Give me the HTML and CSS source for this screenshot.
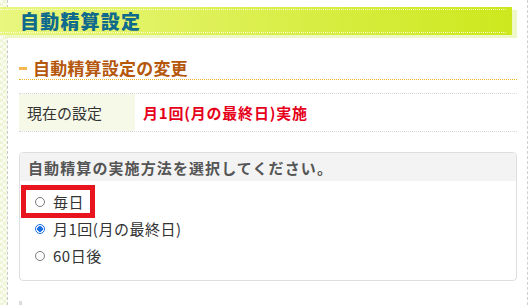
FILE: index.html
```html
<!DOCTYPE html>
<html lang="ja">
<head>
<meta charset="utf-8">
<title>自動精算設定</title>
<link rel="stylesheet" href="styles.css">
</head>
<body>
<div class="page">
  <div class="strip"></div>
  <div class="main">
    <div class="titlebar"><div class="titlebar-inner"><h1 class="title">自動精算設定</h1></div></div>
    <h2 class="section"><span class="marker"></span>自動精算設定の変更</h2>
    <div class="setting">
      <div class="setting-label">現在の設定</div>
      <div class="setting-value">月1回(月の最終日)実施</div>
    </div>
    <div class="box">
      <div class="box-head">自動精算の実施方法を選択してください。</div>
      <div class="options">
        <div class="row"><span class="opt highlight"><span class="radio"></span><span>毎日</span></span></div>
        <div class="row"><span class="opt"><span class="radio checked"></span><span>月1回(月の最終日)</span></span></div>
        <div class="row"><span class="opt"><span class="radio"></span><span>60日後</span></span></div>
      </div>
    </div>
    <div class="next"></div>
  </div>
</div>
</body>
</html>
```
FILE: styles.css
```css
html, body {
  margin: 0;
  padding: 0;
  background: #fff;
  font-family: "Noto Sans CJK JP", "Noto Sans", sans-serif;
  color: #333;
}
.page {
  display: flex;
  height: 305px;
  overflow: hidden;
}
.strip {
  width: 7px;
  flex: none;
  background: repeating-conic-gradient(#eef4d6 0 25%, #fafcef 0 50%) 0 0 / 6px 6px;
}
.main {
  flex: none;
  border-left: 1px dashed #c8c8c8;
  border-right: 1px dashed #d0d0d0;
  padding: 7px 10px 0 11px;
  box-sizing: border-box;
  width: 521px;
}
.titlebar {
  margin-left: -19px;
  width: 512px;
  height: 28px;
  background: linear-gradient(to right, #e9f67f, #cde81d);
  box-shadow: 5px 3px 0 #eef7c6;
  padding: 2px 6px 2px 0;
  box-sizing: border-box;
}
.titlebar-inner {
  height: 100%;
  border-top: 1px dotted rgba(255,255,255,0.7);
  border-bottom: 1px dotted rgba(255,255,255,0.7);
  box-sizing: border-box;
  display: flex;
  align-items: center;
  padding-left: 20px;
}
.title {
  margin: 0;
  font-size: 19px;
  letter-spacing: 1.2px;
  line-height: 20px;
  font-weight: 900;
  color: #0f6b8d;
}
.section {
  margin: 23px 0 0 0;
  font-size: 17px;
  line-height: 20px;
  font-weight: bold;
  color: #b5570b;
  padding-bottom: 1px;
  border-bottom: 1px dotted #efb21c;
  display: flex;
  align-items: center;
  letter-spacing: 0.2px;
}
.marker {
  width: 8px;
  height: 3px;
  background: #f6b850;
  margin-right: 6px;
}
.setting {
  margin-top: 13px;
  display: flex;
  border-top: 1px dotted #d8d8d8;
  border-bottom: 1px dotted #d8d8d8;
  height: 39px;
  box-sizing: border-box;
}
.setting-label {
  width: 116px;
  background: #f7f9e8;
  padding-left: 8px;
  box-sizing: border-box;
  display: flex;
  align-items: center;
  font-size: 15px;
  color: #333;
}
.setting-value {
  padding-left: 8px;
  display: flex;
  align-items: center;
  font-size: 15px;
  font-weight: bold;
  color: #e6001a;
  letter-spacing: 0.8px;
}
.box {
  margin-top: 20px;
  border: 1px solid #dedede;
  border-radius: 4px;
}
.box-head {
  height: 28px;
  background: #f3f3f3;
  border-radius: 3px 3px 0 0;
  display: flex;
  align-items: center;
  padding-left: 8px;
  font-size: 15px;
  font-weight: bold;
  color: #555;
  letter-spacing: 1.1px;
}
.options {
  padding: 7px 0 11px 6px;
}
.row {
  height: 27px;
  display: flex;
  align-items: center;
}
.opt {
  display: inline-flex;
  align-items: center;
  gap: 8px;
  height: 23px;
  padding: 0 8px 0 9px;
  font-size: 15px;
  color: #333;
  letter-spacing: 0.5px;
}
.highlight {
  outline: 5px solid #e8141e;
  padding-right: 6px;
}
.radio {
  width: 10px;
  height: 10px;
  border-radius: 50%;
  border: 1px solid #7a7a7a;
  box-sizing: border-box;
  background: #fff;
  flex: none;
}
.radio.checked {
  border: 1.5px solid #1a6fe6;
  background: radial-gradient(circle, #1a6fe6 0 2.6px, #fff 3px);
}
.next {
  margin-top: 20px;
  width: 3px;
  height: 4px;
  background: #dcdcdc;
}
```
